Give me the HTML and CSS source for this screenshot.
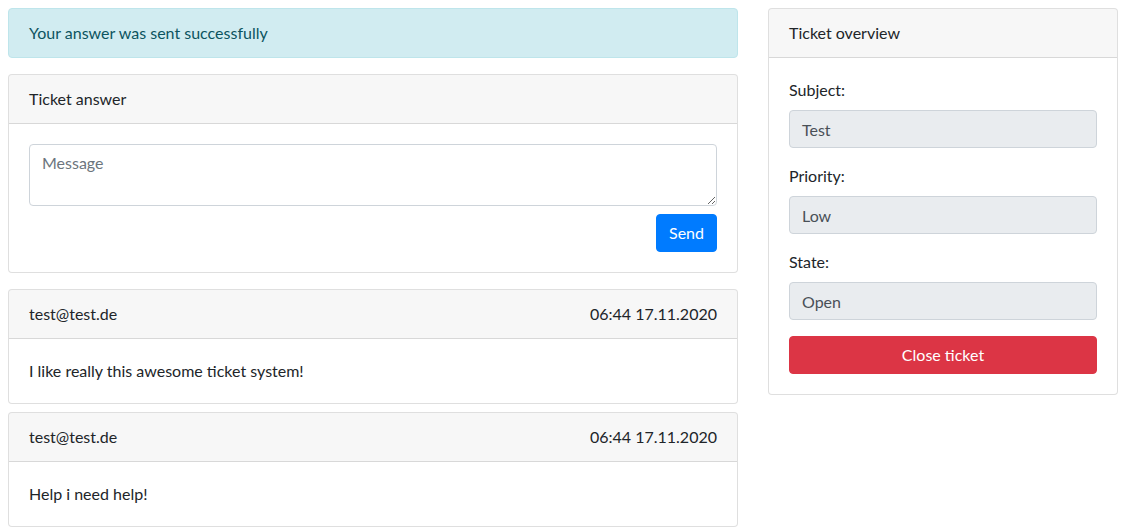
FILE: index.html
```html
<!DOCTYPE html>
<html lang="en">
<head>
<meta charset="utf-8">
<title>Ticket</title>
<link rel="stylesheet" href="styles.css">
</head>
<body>
<div class="page">
  <main class="main-col">
    <div class="alert">Your answer was sent successfully</div>
    <section class="card answer-card">
      <div class="card-header">Ticket answer</div>
      <div class="card-body">
        <textarea class="form-control message" placeholder="Message"></textarea>
        <div class="actions"><button class="btn btn-primary">Send</button></div>
      </div>
    </section>
    <section class="card msg-card">
      <div class="card-header split"><span>test@test.de</span><span>06:44 17.11.2020</span></div>
      <div class="card-body">I like really this awesome ticket system!</div>
    </section>
    <section class="card msg-card">
      <div class="card-header split"><span>test@test.de</span><span>06:44 17.11.2020</span></div>
      <div class="card-body">Help i need help!</div>
    </section>
  </main>
  <aside class="side-col">
    <section class="card">
      <div class="card-header">Ticket overview</div>
      <div class="card-body">
        <div class="form-group">
          <label class="label">Subject:</label>
          <div class="form-control disabled">Test</div>
        </div>
        <div class="form-group">
          <label class="label">Priority:</label>
          <div class="form-control disabled">Low</div>
        </div>
        <div class="form-group">
          <label class="label">State:</label>
          <div class="form-control disabled">Open</div>
        </div>
        <button class="btn btn-danger btn-block">Close ticket</button>
      </div>
    </section>
  </aside>
</div>
</body>
</html>
```
FILE: styles.css
```css
* { box-sizing: border-box; }
html, body { margin: 0; padding: 0; background: #fff; }
body {
  font-family: Lato, "Open Sans", sans-serif;
  font-size: 16px;
  line-height: 24px;
  color: #212529;
}
.page {
  display: flex;
  align-items: flex-start;
  gap: 30px;
  padding: 8px 12px 0 8px;
}
.main-col { width: 730px; display: flex; flex-direction: column; }
.side-col { width: 350px; }
.alert {
  background: #d1ecf1;
  border: 1px solid #bee5eb;
  color: #0c5460;
  border-radius: 4px;
  padding: 12px 20px;
  margin-bottom: 16px;
}
.card {
  border: 1px solid rgba(0,0,0,.125);
  border-radius: 4px;
  background: #fff;
}
.answer-card { margin-bottom: 16px; }
.msg-card { margin-bottom: 8px; }
.card-header {
  background: rgba(0,0,0,.03);
  border-bottom: 1px solid rgba(0,0,0,.125);
  padding: 12px 20px;
  border-radius: 3px 3px 0 0;
}
.card-header.split { display: flex; justify-content: space-between; }
.card-body { padding: 20px; }
.form-control {
  display: block;
  width: 100%;
  border: 1px solid #ced4da;
  border-radius: 4px;
  padding: 7px 12px 5px;
  font: inherit;
  color: #495057;
  line-height: 24px;
}
.message { height: 62px; resize: vertical; padding-top: 6px; padding-bottom: 6px; }
.message::placeholder { color: #6c757d; }
.disabled { background: #e9ecef; height: 38px; }
.actions { display: flex; justify-content: flex-end; margin-top: 8px; }
.btn {
  font: inherit;
  line-height: 24px;
  padding: 6px 12px;
  border: 1px solid transparent;
  border-radius: 4px;
  color: #fff;
  cursor: pointer;
}
.btn-primary { background: #007bff; border-color: #007bff; }
.btn-danger { background: #dc3545; border-color: #dc3545; }
.btn-block { display: block; width: 100%; }
.form-group { margin-bottom: 16px; }
.label { display: block; margin-bottom: 8px; }
```
